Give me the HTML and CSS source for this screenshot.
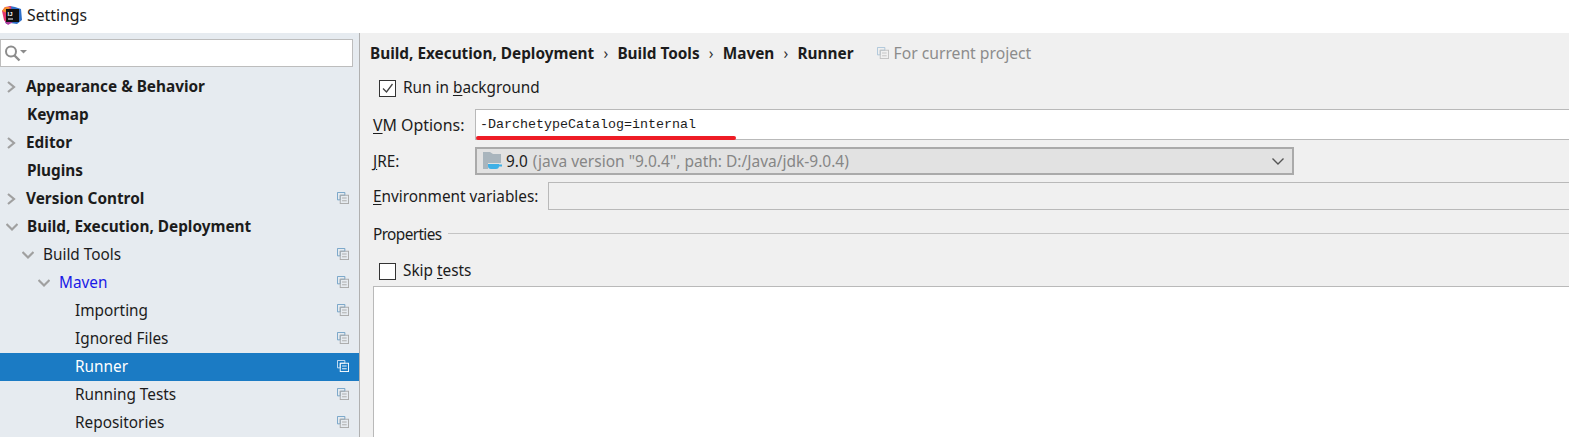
FILE: index.html
```html
<!DOCTYPE html>
<html>

  <head>
    <meta charset="UTF-8">
    <title>Settings</title>
    <link rel="stylesheet" href="styles.css">
  </head>

  <body>
    <svg class="defs" width="0" height="0">
      <symbol id="copyIcon" viewBox="0 0 13 13">
        <path d="M.5.5h8v3h-5v5h-3z" fill="none" stroke="#6f9fc4"/>
        <rect x="3.5" y="3.5" width="9" height="9" fill="none" stroke="#a9a9a9"/>
        <path d="M5.5 6.5h5M5.5 9.5h5" stroke="#a9a9a9"/>
      </symbol>
      <symbol id="copyIconSel" viewBox="0 0 13 13">
        <path d="M.5.5h8v3h-5v5h-3z" fill="none" stroke="#d5e6f5"/>
        <rect x="3.5" y="3.5" width="9" height="9" fill="none" stroke="#fff"/>
        <path d="M5.5 6.5h5M5.5 9.5h5" stroke="#fff"/>
      </symbol>
      <symbol id="copyIconFaint" viewBox="0 0 13 13">
        <path d="M.5.5h8v3h-5v5h-3z" fill="none" stroke="#a9c3d8"/>
        <rect x="3.5" y="3.5" width="9" height="9" fill="none" stroke="#c2c2c2"/>
        <path d="M5.5 6.5h5M5.5 9.5h5" stroke="#c2c2c2"/>
      </symbol>
      <symbol id="arrowRight" viewBox="0 0 12 12">
        <path d="M2 1l6 5-6 5" fill="none" stroke="#a0a0a0" stroke-width="2.200"/>
      </symbol>
      <symbol id="arrowDown" viewBox="0 0 12 12">
        <path d="M0.500 3l5.500 5.500 5.500-5.500" fill="none" stroke="#a0a0a0" stroke-width="2.200"/>
      </symbol>
    </svg>

    <div class="titlebar">
      <svg class="appIcon" width="20" height="20" viewBox="0 0 20 20">
        <path d="M2 4l6-3 5 1 6 2 1 11-5 4-7-1-4 1-2-6z" fill="#2d6fc9"/>
        <path d="M0 6l3-4 6-1 1 9-5 9-3-4z" fill="#e3366e"/>
        <path d="M0 6l3-4 5 0-3 6z" fill="#f58a2c"/>
        <path d="M3 17l5-4 3 4-5 3z" fill="#b13ba0"/>
        <rect x="4" y="4" width="13" height="13" fill="#111"/>
        <text x="5.500" y="10.500" class="appIconText">IJ</text>
        <rect x="6" y="13.500" width="5" height="1" fill="#fff"/>
      </svg>
      <span class="titleText">Settings</span>
    </div>

    <div class="content">
      <div class="sidebar">
        <div class="search">
          <svg width="24" height="17" viewBox="0 0 24 17">
            <circle cx="6" cy="6.500" r="5" fill="none" stroke="#8c8c8c" stroke-width="2"/>
            <path d="M9.500 10.500l5 5" stroke="#8c8c8c" stroke-width="2.400"/>
            <path d="M15 5h7l-3.500 3.500z" fill="#8c8c8c"/>
          </svg>
        </div>
        <div class="tree">
          <div class="row top"><svg class="arrow"><use href="#arrowRight"/></svg><span class="bold">Appearance &amp; Behavior</span></div>
          <div class="row top noArrow"><span class="bold">Keymap</span></div>
          <div class="row top"><svg class="arrow"><use href="#arrowRight"/></svg><span class="bold">Editor</span></div>
          <div class="row top noArrow"><span class="bold">Plugins</span></div>
          <div class="row top"><svg class="arrow"><use href="#arrowRight"/></svg><span class="bold">Version Control</span><svg class="copy"><use href="#copyIcon"/></svg></div>
          <div class="row top openRow"><svg class="arrow"><use href="#arrowDown"/></svg><span class="bold">Build, Execution, Deployment</span></div>
          <div class="row lvl1"><svg class="arrow"><use href="#arrowDown"/></svg><span>Build Tools</span><svg class="copy"><use href="#copyIcon"/></svg></div>
          <div class="row lvl2"><svg class="arrow"><use href="#arrowDown"/></svg><span class="maven">Maven</span><svg class="copy"><use href="#copyIcon"/></svg></div>
          <div class="row lvl3"><span>Importing</span><svg class="copy"><use href="#copyIcon"/></svg></div>
          <div class="row lvl3"><span>Ignored Files</span><svg class="copy"><use href="#copyIcon"/></svg></div>
          <div class="row lvl3 selected"><span>Runner</span><svg class="copy"><use href="#copyIconSel"/></svg></div>
          <div class="row lvl3"><span>Running Tests</span><svg class="copy"><use href="#copyIcon"/></svg></div>
          <div class="row lvl3"><span>Repositories</span><svg class="copy"><use href="#copyIcon"/></svg></div>
        </div>
      </div>

      <div class="main">
        <div class="crumbs">
          <span class="bold">Build, Execution, Deployment</span><span class="sep">›</span>
          <span class="bold">Build Tools</span><span class="sep">›</span>
          <span class="bold">Maven</span><span class="sep">›</span>
          <span class="bold">Runner</span>
          <svg class="projIcon"><use href="#copyIconFaint"/></svg>
          <span class="projText">For current project</span>
        </div>

        <div class="form">
          <div class="checkRow"><span class="check"><svg width="15" height="15" viewBox="0 0 15 15"><path d="M3 7.500l3.500 3.500 6-8" fill="none" stroke="#444" stroke-width="1.300"/></svg></span><span class="checkText">Run in <u>b</u>ackground</span></div>

          <div class="fieldRow vmRow">
            <span class="label vmLabel"><span class="vmText"><u>V</u>M Options:</span></span>
            <div class="vmField">-DarchetypeCatalog=internal<div class="redLine"></div></div>
          </div>

          <div class="fieldRow jreRow">
            <span class="label vmLabel"><u>J</u>RE:</span>
            <div class="combo">
              <svg class="folder" width="20" height="20" viewBox="0 0 20 20">
                <path d="M0 1h7l3 2h8v9H0z" fill="#a9b5bd"/>
                <path d="M0 12h5v6H0z" fill="#a9b5bd"/>
                <path d="M5 13h11v2a3 3 0 0 1-3 3H8a3 3 0 0 1-3-3z" fill="#3fb0e6"/>
                <path d="M15 13.500h4v2h-4z" fill="#3fb0e6"/>
              </svg>
              <span class="jreName">9.0</span>
              <span class="jreInfo">(java version "9.0.4", path: D:/Java/jdk-9.0.4)</span>
              <svg class="comboArrow" width="12" height="7" viewBox="0 0 12 7"><path d="M.500.500L6 6 11.500.500" fill="none" stroke="#555" stroke-width="1.400"/></svg>
            </div>
          </div>

          <div class="fieldRow envRow">
            <span class="label envLabel"><u>E</u>nvironment variables:</span>
            <div class="envField"></div>
          </div>

          <div class="propRow"><span class="propText">Properties</span><div class="propLine"></div></div>

          <div class="checkRow skipRow"><span class="check"></span><span class="checkText">Skip <u>t</u>ests</span></div>

          <div class="propsTable"></div>
        </div>
      </div>
    </div>
  </body>

</html>
```

FILE: styles.css
```css
* {
    box-sizing: border-box;
}
html, body {
    margin: 0;
    height: 437px;
    overflow: hidden;
}
body {
    display: flex;
    flex-direction: column;
    background-color: white;
    color: #1c1c1c;
    font-family: "Noto Sans", "Open Sans", sans-serif;
    font-size: 15.35px;
}
u {
    text-underline-offset: 2px;
}
.defs {
    position: absolute;
}
.bold {
    font-weight: bold;
}
.titlebar {
    height: 33px;
    flex: none;
    display: flex;
    align-items: center;
    padding-left: 2px;
    padding-bottom: 4px;
    background-color: white;
}
.appIcon {
    flex: none;
}
.appIconText {
    font-family: "Liberation Sans", sans-serif;
    font-size: 6px;
    font-weight: bold;
    fill: white;
}
.titleText {
    margin-left: 5px;
    font-size: 15.75px;
}
.content {
    flex: 1;
    display: flex;
    min-height: 0;
}
.sidebar {
    width: 360px;
    flex: none;
    border-right: 1px solid #b0b0b0;
    background-color: #e6ebf0;
    padding-top: 6px;
}
.search {
    width: 353px;
    height: 28px;
    display: flex;
    align-items: center;
    padding-left: 4px;
    background-color: white;
    border: 1px solid #bdbdbd;
}
.tree {
    margin-top: 6px;
}
.row {
    position: relative;
    display: flex;
    align-items: center;
    height: 28px;
}
.row span {
    margin-bottom: 2px;
}
.row svg.arrow {
    width: 12px;
    height: 12px;
    flex: none;
    margin-right: 8px;
}
.top {
    padding-left: 6px;
}
.noArrow {
    padding-left: 27px;
}
.openRow .bold {
    margin-left: 1px;
}
.lvl1 {
    padding-left: 22px;
}
.lvl2 {
    padding-left: 38px;
}
.lvl1 svg.arrow, .lvl2 svg.arrow {
    margin-right: 9px;
}
.lvl3 {
    padding-left: 75px;
}
.maven {
    color: #1a1ae6;
}
.selected {
    background-color: #1b7bc4;
    color: white;
}
.copy {
    position: absolute;
    right: 10px;
    top: 7px;
    width: 12px;
    height: 12px;
}
.main {
    flex: 1;
    min-width: 0;
    display: flex;
    flex-direction: column;
    background-color: #f0f0f0;
}
.crumbs {
    height: 41px;
    flex: none;
    display: flex;
    align-items: center;
    padding-left: 10px;
    padding-bottom: 1px;
    white-space: nowrap;
}
.sep {
    margin: 0 9.200px;
    color: #333;
}
.projIcon {
    width: 12px;
    height: 12px;
    margin-left: 23px;
    margin-right: 5px;
}
.projText {
    color: #8c8c8c;
    font-size: 15.7px;
}
.form {
    flex: 1;
    min-height: 0;
    display: flex;
    flex-direction: column;
    padding-left: 13px;
}
.checkRow {
    height: 28px;
    flex: none;
    display: flex;
    align-items: center;
    padding-left: 6px;
}
.check {
    width: 17px;
    height: 17px;
    display: flex;
    align-items: center;
    justify-content: center;
    margin-right: 7px;
    background-color: white;
    border: 1px solid #333;
}
.checkText {
    margin-bottom: 2px;
}
.fieldRow {
    flex: none;
    display: flex;
    align-items: center;
    margin-top: 7px;
}
.label {
    flex: none;
}
.vmLabel {
    width: 102px;
}
.vmText {
    font-size: 15.9px;
}
.envLabel {
    width: 175px;
}
.vmRow {
    height: 31px;
}
.vmField {
    position: relative;
    flex: 1;
    height: 31px;
    line-height: 29px;
    padding-left: 4px;
    background-color: white;
    border: 1px solid #b9b9b9;
    border-right: none;
    font-family: "Liberation Mono", monospace;
    font-size: 13.33px;
}
.redLine {
    position: absolute;
    left: 0;
    top: 26px;
    width: 260px;
    height: 4px;
    border-radius: 2px;
    background-color: #ee1c25;
}
.jreRow {
    height: 28px;
}
.combo {
    width: 819px;
    height: 28px;
    display: flex;
    align-items: center;
    padding-left: 6px;
    padding-right: 8px;
    background-color: #e2e2e2;
    border: 2px solid #aaaaaa;
}
.folder {
    flex: none;
    margin-right: 3px;
}
.jreName {
    margin-right: 5px;
}
.jreInfo {
    color: #868686;
    font-size: 15.5px;
}
.comboArrow {
    margin-left: auto;
}
.envRow {
    height: 28px;
}
.envField {
    flex: 1;
    height: 28px;
    border: 1px solid #b9b9b9;
    border-right: none;
}
.propRow {
    height: 28px;
    flex: none;
    display: flex;
    align-items: center;
    margin-top: 10px;
}
.propText {
    letter-spacing: -0.6px;
}
.propLine {
    flex: 1;
    height: 1px;
    margin-left: 6px;
    margin-top: -2px;
    background-color: #c4c4c4;
}
.skipRow {
    margin-top: 9px;
}
.propsTable {
    flex: 1;
    margin-top: 1px;
    background-color: white;
    border-top: 1px solid #b9b9b9;
    border-left: 1px solid #b9b9b9;
}
```
